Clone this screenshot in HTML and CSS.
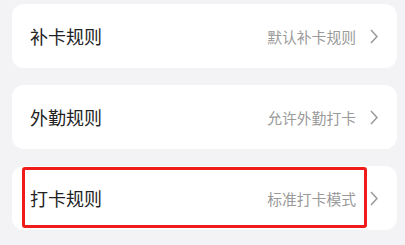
FILE: index.html
```html
<!DOCTYPE html>
<html lang="zh-CN">
<head>
    <meta charset="UTF-8">
    <meta name="viewport" content="width=device-width, initial-scale=1.0">
    <title>考勤规则</title>
    <link rel="stylesheet" href="styles.css">
</head>
<body>
    <div class="rule-list">
        <div class="rule-item">
            <span class="rule-title">补卡规则</span>
            <span class="rule-value">默认补卡规则</span>
            <svg class="chevron" viewBox="0 0 8 15"><path d="M1 1 L7 7.5 L1 14"/></svg>
        </div>
        <div class="rule-item">
            <span class="rule-title">外勤规则</span>
            <span class="rule-value">允许外勤打卡</span>
            <svg class="chevron" viewBox="0 0 8 15"><path d="M1 1 L7 7.5 L1 14"/></svg>
        </div>
        <div class="rule-item">
            <span class="rule-title">打卡规则</span>
            <span class="rule-value">标准打卡模式</span>
            <svg class="chevron" viewBox="0 0 8 15"><path d="M1 1 L7 7.5 L1 14"/></svg>
            <div class="highlight"></div>
        </div>
    </div>
</body>
</html>
```

FILE: styles.css
```css
body {
    margin: 0;
    background-color: #f3f3f5;
    font-family: "Noto Sans CJK SC", "Noto Sans", sans-serif;
}
.rule-list {
    display: flex;
    flex-direction: column;
    gap: 17px;
    padding: 4px 8px 0 12px;
}
.rule-item {
    position: relative;
    display: flex;
    align-items: center;
    height: 64px;
    padding: 0 19px 0 18px;
    background: #fff;
    border-radius: 12px;
}
.rule-title {
    flex: 1;
    font-size: 18px;
    font-weight: 400;
    color: #222;
}
.rule-value {
    font-size: 14.8px;
    color: #9a9a9a;
    margin-right: 14px;
}
.chevron {
    width: 8px;
    height: 15px;
    fill: none;
    stroke: #999;
    stroke-width: 1.5;
}
.highlight {
    position: absolute;
    left: 10px;
    top: 1px;
    width: 345px;
    height: 61px;
    box-sizing: border-box;
    border: 3px solid #f01c1c;
    border-radius: 3px;
}
```
